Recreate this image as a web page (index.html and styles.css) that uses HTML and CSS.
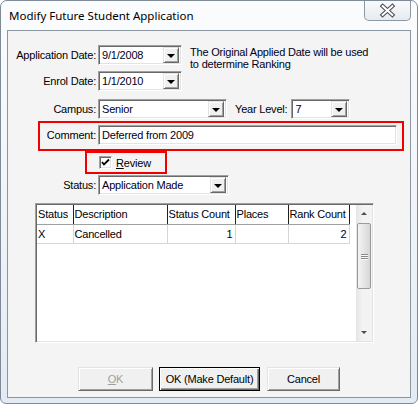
FILE: index.html
```
<!DOCTYPE html>
<html>
<head>
<meta charset="utf-8">
<link rel="stylesheet" href="styles.css">
</head>
<body>
<div class="window">
  <div class="titlebar">
    <span class="title">Modify Future Student Application</span>
    <div class="close">
      <svg width="46" height="19" viewBox="0 0 46 19">
        <path d="M18 5 L28 14 M28 5 L18 14" stroke="#4a4f55" stroke-width="4.2" stroke-linecap="square" fill="none"/>
        <path d="M18 5 L28 14 M28 5 L18 14" stroke="#ffffff" stroke-width="2" stroke-linecap="square" fill="none"/>
      </svg>
    </div>
  </div>
  <div class="client">
    <div class="row r1">
      <span class="lbl">Application Date:</span>
      <div class="combo w-date"><span class="val">9/1/2008</span><span class="drop"><span class="tri"></span></span></div>
      <div class="note">The Original Applied Date will be used<br>to determine Ranking</div>
    </div>
    <div class="row r2">
      <span class="lbl">Enrol Date:</span>
      <div class="combo w-date"><span class="val">1/1/2010</span><span class="drop"><span class="tri"></span></span></div>
    </div>
    <div class="row r3">
      <span class="lbl">Campus:</span>
      <div class="combo w-campus"><span class="val">Senior</span><span class="drop"><span class="tri"></span></span></div>
      <span class="lbl-inline">Year Level:</span>
      <div class="combo w-year"><span class="val">7</span><span class="drop"><span class="tri"></span></span></div>
    </div>
    <div class="cbox">
      <span class="lbl lbl-c">Comment:</span>
      <div class="textbox"><span class="val">Deferred from 2009</span></div>
    </div>
    <div class="rbox">
      <span class="check"><svg width="9" height="9" viewBox="0 0 9 9"><path d="M1 4 L3 6.5 L8 1.5" stroke="#000" stroke-width="1.8" fill="none"/></svg></span>
      <span class="chklbl"><u>R</u>eview</span>
    </div>
    <div class="row r4">
      <span class="lbl">Status:</span>
      <div class="combo w-status"><span class="val">Application Made</span><span class="drop"><span class="tri"></span></span></div>
    </div>
    <div class="grid">
      <div class="tablewrap">
        <table>
          <thead>
            <tr>
              <th class="c1">Status</th>
              <th class="c2">Description</th>
              <th class="c3">Status Count</th>
              <th class="c4">Places</th>
              <th class="c5">Rank Count</th>
            </tr>
          </thead>
          <tbody>
            <tr>
              <td>X</td>
              <td>Cancelled</td>
              <td class="num">1</td>
              <td></td>
              <td class="num">2</td>
            </tr>
          </tbody>
        </table>
      </div>
      <div class="vscroll">
        <div class="sbtn"><span class="tri-up"></span></div>
        <div class="track">
          <div class="thumb"><span class="grip"></span><span class="grip"></span><span class="grip"></span></div>
        </div>
        <div class="sbtn"><span class="tri-down"></span></div>
      </div>
    </div>
    <div class="buttons">
      <div class="btn b-ok disabled"><span><u>O</u>K</span></div>
      <div class="btn b-def default">OK (Make Default)</div>
      <div class="btn b-cancel">Cancel</div>
    </div>
  </div>
</div>
</body>
</html>
```
FILE: styles.css
```
* { box-sizing: border-box; }
body {
  margin: 0;
  font-family: "Liberation Sans", Arial, sans-serif;
  font-size: 11px;
  letter-spacing: -0.2px;
  color: #000;
  background: #fff;
}
.window {
  width: 418px;
  height: 404px;
  border: 1px solid #7e8a97;
  border-radius: 7px 7px 6px 6px;
  background: linear-gradient(#fbfcfe, #eef3f8 60%, #e2eaf3);
  display: flex;
  flex-direction: column;
  overflow: hidden;
}
.titlebar {
  height: 29px;
  flex-shrink: 0;
  display: flex;
  align-items: flex-start;
}
.title {
  font-family: "Noto Sans", "Liberation Sans", sans-serif;
  font-size: 11.5px;
  letter-spacing: 0;
  margin: 7px 0 0 8px;
  color: #000;
}
.close {
  margin-left: auto;
  margin-right: 6px;
  margin-top: -1px;
  width: 47px;
  height: 21px;
  border: 1px solid #8d98a4;
  border-top: none;
  border-radius: 0 0 5px 5px;
  background: linear-gradient(#fafbfc, #e6ebf0);
  display: flex;
  align-items: center;
  justify-content: center;
}
.close svg { display: block; }
.client {
  flex: 1;
  margin: 0 6px 5px 6px;
  border: 1px solid #8b96a1;
  background: #f4f4f4;
  display: flex;
  flex-direction: column;
  padding-top: 14px;
}
.row {
  display: flex;
  align-items: center;
  height: 20px;
}
.r2 { margin-top: 6px; }
.r3 { margin-top: 8px; }
.r4 { margin-top: 1px; }
.lbl {
  width: 90px;
  flex-shrink: 0;
  padding-right: 2px;
  text-align: right;
}
.lbl-c { width: 58px; }
.lbl-inline { margin: 0 4px 0 8px; }
.combo, .textbox {
  height: 20px;
  background: #fff;
  border-top: 1px solid #a0a0a0;
  border-left: 1px solid #a0a0a0;
  border-right: 1px solid #ffffff;
  border-bottom: 1px solid #ffffff;
  box-shadow: inset 1px 1px 0 #696969, inset -1px -1px 0 #e3e3e3;
  display: flex;
  align-items: center;
  padding: 1px 1px 1px 1px;
  flex-shrink: 0;
}
.val {
  flex: 1;
  padding-left: 2px;
  white-space: nowrap;
  overflow: hidden;
  color: #00001a;
}
.w-date { width: 84px; }
.w-campus { width: 129px; }
.w-year { width: 59px; }
.w-status { width: 131px; }
.textbox { width: 299px; }
.drop {
  width: 16px;
  height: 16px;
  margin-right: 1px;
  background: #f0f0f0;
  border-top: 1px solid #e3e3e3;
  border-left: 1px solid #e3e3e3;
  border-right: 1px solid #696969;
  border-bottom: 1px solid #696969;
  box-shadow: inset 1px 1px 0 #fff, inset -1px -1px 0 #a0a0a0;
  display: flex;
  align-items: center;
  justify-content: center;
}
.tri {
  width: 0;
  height: 0;
  border-left: 4px solid transparent;
  border-right: 4px solid transparent;
  border-top: 4px solid #000;
  margin-top: 1px;
}
.note {
  align-self: flex-start;
  margin: 1px 0 0 8px;
  line-height: 12px;
  white-space: nowrap;
  color: #00001a;
}
.cbox {
  margin: 2px 0 0 30px;
  width: 366px;
  height: 30px;
  border: 2px solid #f20000;
  display: flex;
  align-items: center;
  padding-bottom: 2px;
}
.rbox {
  margin-left: 77px;
  width: 82px;
  height: 23px;
  border: 2px solid #f20000;
  display: flex;
  align-items: center;
  padding-left: 12px;
}
.check {
  width: 13px;
  height: 13px;
  background: #fff;
  border-top: 1px solid #a0a0a0;
  border-left: 1px solid #a0a0a0;
  border-right: 1px solid #fff;
  border-bottom: 1px solid #fff;
  box-shadow: inset 1px 1px 0 #696969, inset -1px -1px 0 #e3e3e3;
  display: flex;
  align-items: center;
  justify-content: center;
}
.check svg { display: block; }
.chklbl { margin-left: 4px; }
.grid {
  margin: 8px 0 0 27px;
  width: 339px;
  height: 140px;
  background: #fff;
  border-top: 1px solid #a0a0a0;
  border-left: 1px solid #a0a0a0;
  border-right: 1px solid #ffffff;
  border-bottom: 1px solid #ffffff;
  box-shadow: inset 1px 1px 0 #696969, inset -1px -1px 0 #e3e3e3;
  padding: 1px;
  display: flex;
}
.tablewrap { flex: 1; }
table {
  border-collapse: collapse;
  table-layout: fixed;
  font-size: 11px;
}
th, td {
  height: 19px;
  padding: 0 2px 0 1px;
  white-space: nowrap;
  overflow: hidden;
  text-align: left;
  font-weight: normal;
}
th {
  border-right: 1px solid #202020;
  border-bottom: 1px solid #a0a0a0;
  background: #fff;
}
td {
  border-right: 1px solid #d6d6d6;
  border-bottom: 1px solid #d6d6d6;
}
td.num { text-align: right; }
.c1 { width: 36px; }
.c2 { width: 94px; }
.c3 { width: 68px; }
.c4 { width: 53px; }
.c5 { width: 61px; }
.vscroll {
  width: 16px;
  display: flex;
  flex-direction: column;
  background: linear-gradient(90deg, #e4e4e4, #f3f3f3 40%, #f3f3f3);
}
.sbtn {
  height: 17px;
  display: flex;
  align-items: center;
  justify-content: center;
}
.tri-up, .tri-down {
  width: 0;
  height: 0;
  border-left: 3px solid transparent;
  border-right: 3px solid transparent;
}
.tri-up { border-bottom: 3px solid #4d4d4d; }
.tri-down { border-top: 3px solid #4d4d4d; }
.track {
  flex: 1;
  padding: 1px 1px 0 1px;
}
.thumb {
  height: 66px;
  border: 1px solid #9a9a9a;
  border-radius: 2px;
  background: linear-gradient(90deg, #f3f3f3, #e6e6e6 50%, #d6d6d6);
  display: flex;
  flex-direction: column;
  align-items: center;
  justify-content: center;
  gap: 1px;
}
.grip {
  width: 7px;
  height: 1px;
  background: #8a8a8a;
  box-shadow: 0 1px 0 #fafafa;
}
.buttons {
  display: flex;
  margin: 24px 0 0 70px;
}
.btn {
  height: 24px;
  background: #f0f0f0;
  border-top: 1px solid #e3e3e3;
  border-left: 1px solid #e3e3e3;
  border-right: 1px solid #696969;
  border-bottom: 1px solid #696969;
  box-shadow: inset 1px 1px 0 #fff, inset -1px -1px 0 #a0a0a0;
  display: flex;
  align-items: center;
  justify-content: center;
  white-space: nowrap;
}
.b-ok { width: 75px; }
.b-def { width: 101px; margin-left: 6px; }
.b-cancel { width: 73px; margin-left: 7px; }
.disabled { color: #a0a0a0; }
.default {
  border: 1px solid #000;
  box-shadow: inset 1px 1px 0 #fff, inset -1px -1px 0 #696969, inset -2px -2px 0 #a0a0a0;
}
```
